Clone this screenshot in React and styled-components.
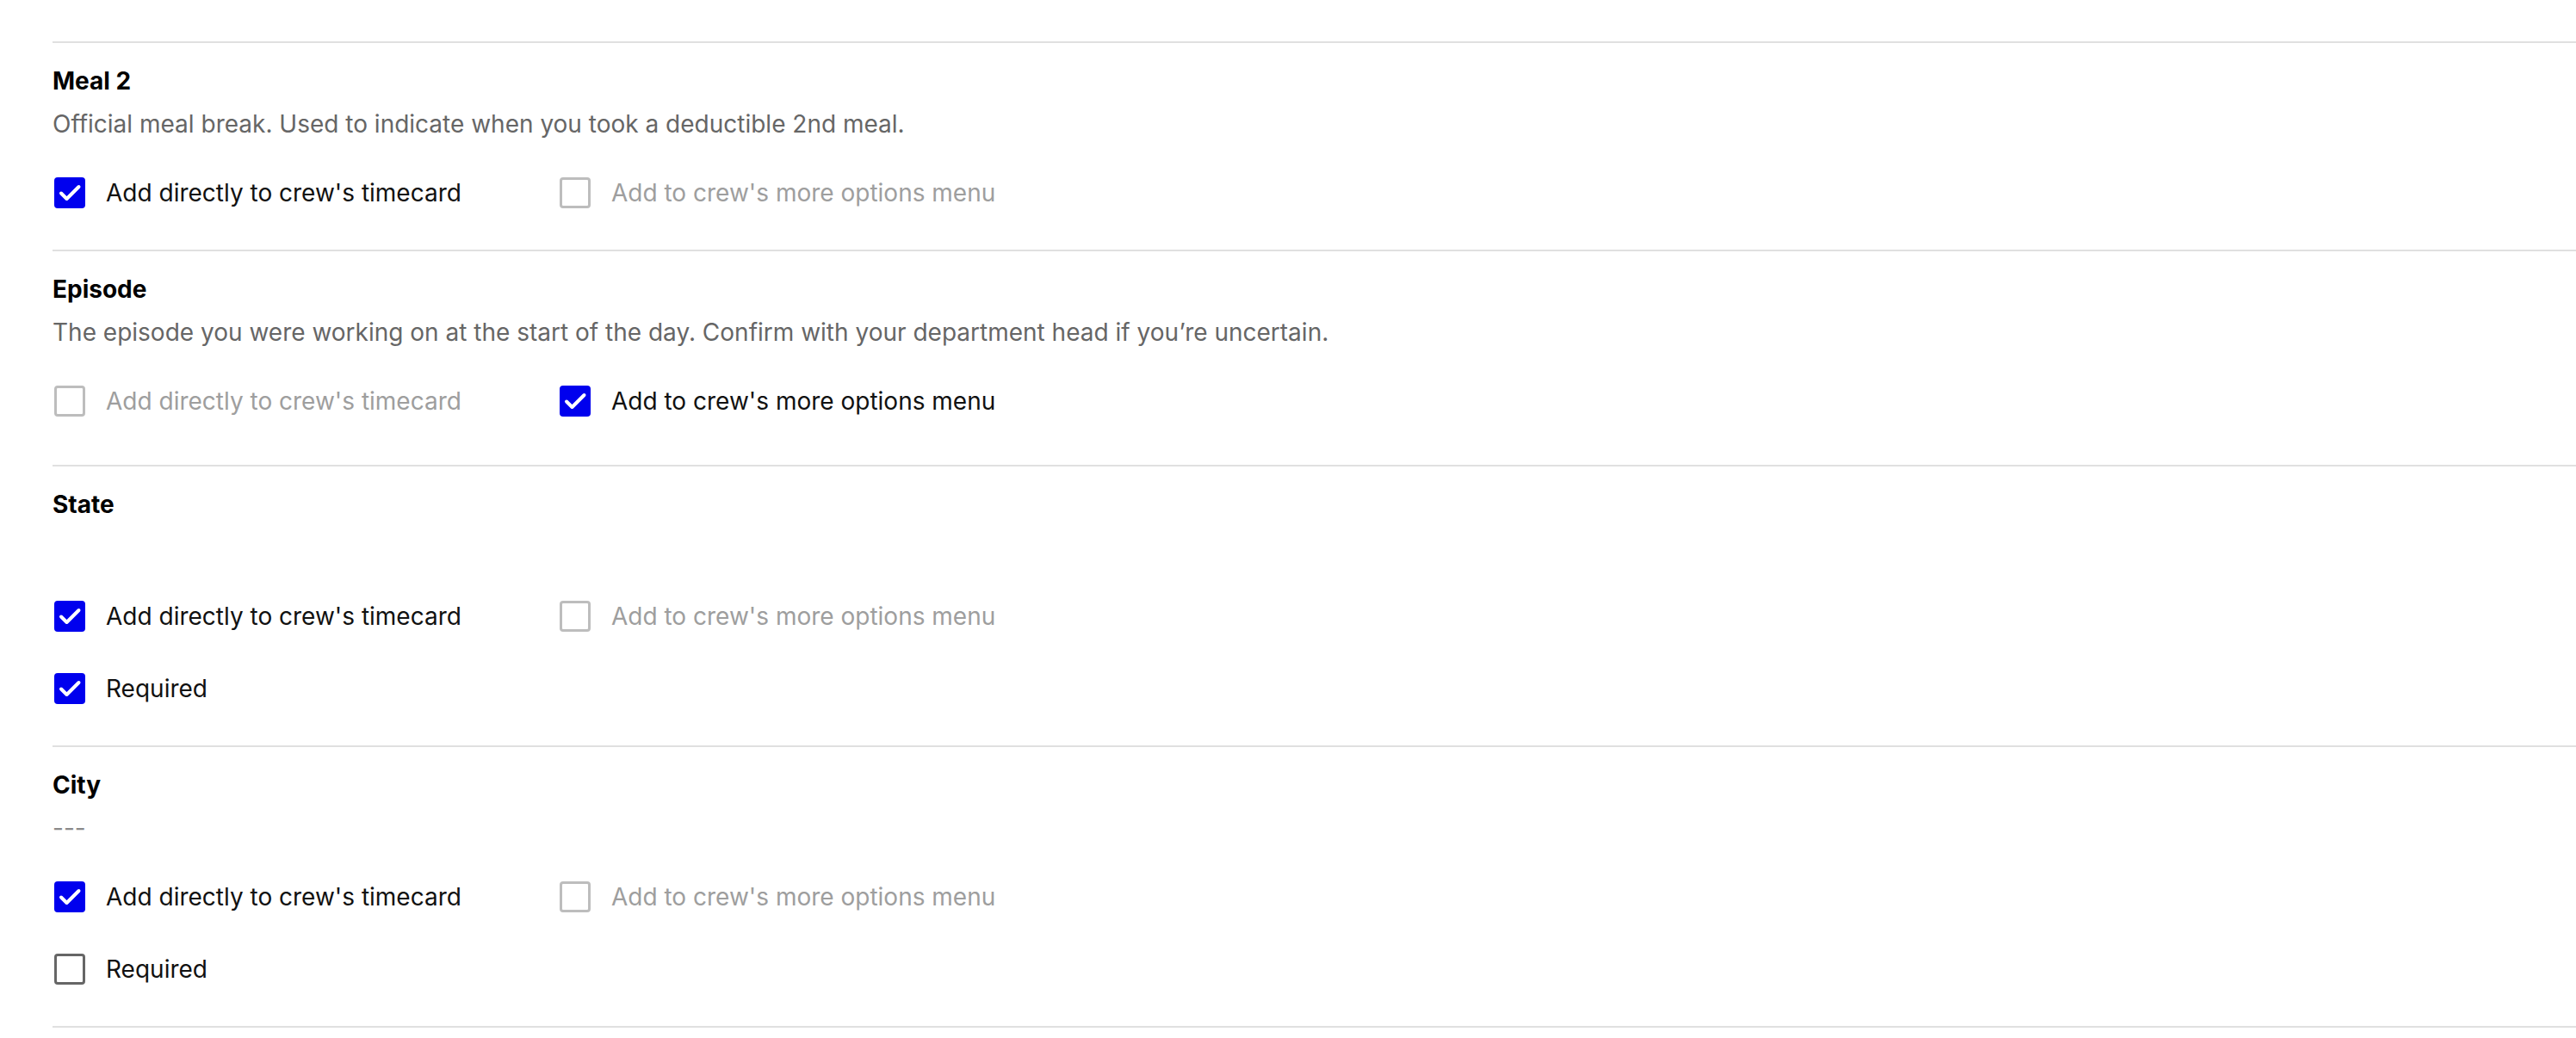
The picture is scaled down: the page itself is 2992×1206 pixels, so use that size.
import React from 'react';
import styled, {createGlobalStyle} from 'styled-components';

const GlobalStyle = createGlobalStyle`
  html, body {
    margin: 0;
    padding: 0;
    background: #ffffff;
  }
  body {
    font-family: Inter, "Noto Sans", "Liberation Sans", sans-serif;
    color: #000000;
  }
`

const Page = styled.div`
  padding: 48px 0 0 61px;
`

const List = styled.div`
  border-bottom: 2px solid #e0e0e0;
`

const Section = styled.section`
  border-top: 2px solid #e0e0e0;
  padding: 24px 0 ${p => p.$bottom || 46}px;
`

const Title = styled.h3`
  margin: 0;
  font-size: 28px;
  line-height: 40px;
  font-weight: 700;
  color: #000;
`

const Desc = styled.p`
  margin: 10px 0 0;
  min-height: 40px;
  font-size: 28px;
  line-height: 40px;
  color: ${p => p.$muted ? '#8a8a8a' : '#666666'};
`

const Options = styled.div`
  margin-top: 40px;
  display: flex;
  flex-direction: column;
  gap: 44px;
`

const Row = styled.div`
  display: grid;
  grid-template-columns: 587px auto;
  justify-content: start;
`

const Option = styled.label`
  display: flex;
  align-items: center;
  gap: 24px;
  height: 40px;
  font-size: 28px;
  line-height: 40px;
  color: ${p => p.$dim ? '#9e9e9e' : '#111111'};
`

const Box = styled.span`
  box-sizing: border-box;
  margin-left: 2px;
  width: 36px;
  height: 36px;
  flex: none;
  border-radius: 4px;
  display: flex;
  align-items: center;
  justify-content: center;
  background: ${p => p.$checked ? '#0000ee' : '#ffffff'};
  border: ${p => p.$checked ? 'none' : `3px solid ${p.$dim ? '#bdbdbd' : '#666666'}`};
`

const Check = () => (
  <svg width="36" height="36" viewBox="0 0 36 36">
    <path d="M8 18.5l6.5 6.5L28.5 11" fill="none" stroke="#fff" strokeWidth="4" strokeLinecap="round" strokeLinejoin="round" />
  </svg>
)

const CheckOption = ({checked, dim, children}) => (
  <Option $dim={dim}>
    <Box $checked={checked} $dim={dim}>{checked && <Check />}</Box>
    {children}
  </Option>
)

const sections = [
  {
    title: 'Meal 2',
    desc: 'Official meal break. Used to indicate when you took a deductible 2nd meal.',
    timecard: true,
  },
  {
    title: 'Episode',
    desc: 'The episode you were working on at the start of the day. Confirm with your department head if you’re uncertain.',
    timecard: false,
    bottom: 54,
  },
  {
    title: 'State',
    desc: '',
    timecard: true,
    required: true,
  },
  {
    title: 'City',
    desc: '---',
    muted: true,
    timecard: true,
    required: false,
  },
]

const App = () => {
  return (
    <Page>
      <GlobalStyle />
      <List>
        {sections.map(s => (
          <Section key={s.title} $bottom={s.bottom}>
            <Title>{s.title}</Title>
            <Desc $muted={s.muted}>{s.desc}</Desc>
            <Options>
              <Row>
                <CheckOption checked={s.timecard} dim={!s.timecard}>
                  Add directly to crew's timecard
                </CheckOption>
                <CheckOption checked={!s.timecard} dim={s.timecard}>
                  Add to crew's more options menu
                </CheckOption>
              </Row>
              {s.required !== undefined && (
                <Row>
                  <CheckOption checked={s.required}>Required</CheckOption>
                </Row>
              )}
            </Options>
          </Section>
        ))}
      </List>
    </Page>
  );
}

export default App;
